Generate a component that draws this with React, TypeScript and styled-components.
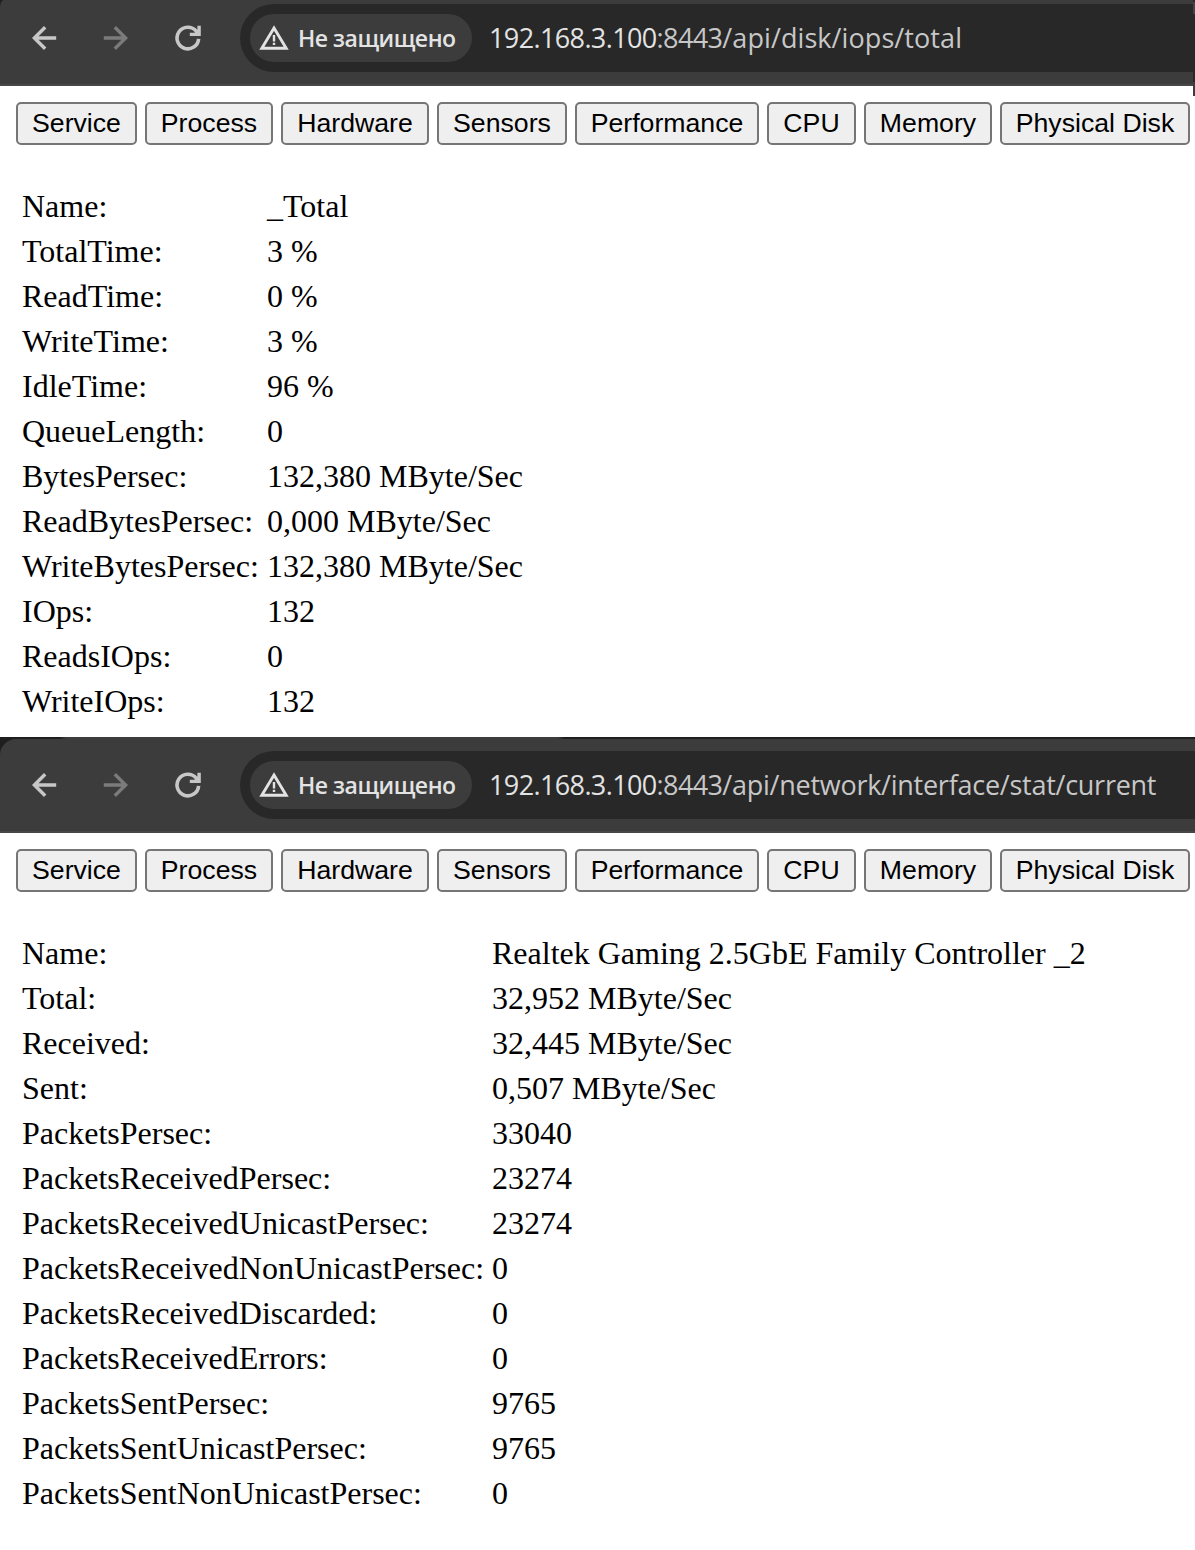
import React from 'react';
import styled, { createGlobalStyle } from 'styled-components';

const GlobalStyle = createGlobalStyle`
  body { margin: 0; background: #fff; overflow: hidden; }
  * { box-sizing: border-box; }
`;

const Page = styled.div`
  position: relative;
  width: 1195px;
  height: 1550px;
  background: #fff;
  overflow: hidden;
`;

const Window = styled.section<{ $height: number }>`
  height: ${p => p.$height}px;
  display: flex;
  flex-direction: column;
`;

const WindowEdge = styled.div`
  position: absolute;
  top: 0;
  right: 0;
  width: 2px;
  height: 96px;
  background: linear-gradient(#282828 2px, #444 2px, #444 14px, #282828 14px, #282828 82px, #3c3c3c 82px);
`;

const TabStrip = styled.div`
  height: 2px;
  background: linear-gradient(to right, #1f1f1f 60px, #3c3c3c 66px, #3c3c3c 558px, #1f1f1f 564px);
`;

const ToolbarBack = styled.div`
  background: #1f1f1f;
`;

const Toolbar = styled.div<{ $first: boolean }>`
  height: ${p => (p.$first ? 86 : 94)}px;
  padding: ${p => (p.$first ? '4px 0 12px 30px' : '12px 0 12px 30px')};
  display: flex;
  align-items: center;
  background: #3c3c3c;
  border-bottom: 2px solid #474747;
  border-top-left-radius: ${p => (p.$first ? '4px 8px' : '16px')};
`;

const NavIcons = styled.div`
  display: flex;
  gap: 44px;
  width: 210px;
  flex: none;
  svg { display: block; }
`;

const Omnibox = styled.div`
  flex: 1;
  height: 68px;
  padding-left: 10px;
  display: flex;
  align-items: center;
  background: #282828;
  border-radius: 34px 0 0 34px;
`;

const SecurityChip = styled.div`
  width: 222px;
  height: 48px;
  padding-left: 9px;
  display: flex;
  align-items: center;
  gap: 9px;
  border-radius: 24px;
  background: #3c3c3c;
  color: #e3e3e3;
  font: 600 23px/48px 'Open Sans', sans-serif;
  letter-spacing: -0.48px;
  white-space: nowrap;
  svg { flex: none; }
`;

const Url = styled.div`
  margin-left: 17px;
  color: #c7c7c7;
  font: 400 27px/48px 'Open Sans', sans-serif;
  letter-spacing: -0.62px;
  white-space: nowrap;
`;

const Host = styled.span`
  color: #e3e3e3;
`;

const Path = styled.span<{ $spacing: number }>`
  letter-spacing: ${p => p.$spacing}px;
`;

const Menu = styled.nav`
  display: flex;
  gap: 8px;
  padding: 16px 0 0 16px;
`;

const MenuButton = styled.button<{ $width: number }>`
  flex: none;
  width: ${p => p.$width}px;
  height: 43px;
  padding: 0 0 1px;
  border: 2px solid #767676;
  border-radius: 5px;
  background: #efefef;
  color: #000;
  font: 26.667px/36px 'Liberation Sans', Arial, sans-serif;
  white-space: nowrap;
`;

const Stats = styled.dl<{ $labelWidth: number }>`
  display: grid;
  grid-template-columns: ${p => p.$labelWidth}px 1fr;
  grid-auto-rows: 45px;
  margin: 39px 0 0 22px;
  color: #000;
  font: 32px/45px 'Liberation Serif', 'Times New Roman', serif;
  white-space: nowrap;
`;

const Label = styled.dt`
  margin: 0;
`;

const Value = styled.dd`
  margin: 0;
`;

const BackIcon = () => (
  <svg width="28" height="28" viewBox="0 0 28 28" fill="none" stroke="#c7c7c7" strokeWidth="3.4">
    <path d="M26.2 14H4.5M15.2 3.2L4.4 14l10.8 10.8" />
  </svg>
);

const ForwardIcon = () => (
  <svg width="28" height="28" viewBox="0 0 28 28" fill="none" stroke="#7b7b7b" strokeWidth="3.4">
    <path d="M1.8 14h21.7M12.8 3.2L23.6 14 12.8 24.8" />
  </svg>
);

const ReloadIcon = () => (
  <svg width="28" height="28" viewBox="0 0 28 28" fill="none" stroke="#c7c7c7" strokeWidth="3.6">
    <path d="M24.6 14.8A10.8 10.8 0 1 1 22.2 7.2L23.6 9.4" />
    <path d="M25.1 1.8V10.4H15.8" strokeWidth="3.4" />
    <path d="M20 9.5L24 5v5z" fill="#c7c7c7" stroke="none" />
  </svg>
);

const WarningIcon = () => (
  <svg width="30" height="26" viewBox="0 0 30 26">
    <path d="M15 3L27.2 23.3H2.8Z" fill="none" stroke="#e3e3e3" strokeWidth="2.9" />
    <path d="M13.8 10h2.4v6.4h-2.4zM13.8 17.8h2.4v2.2h-2.4z" fill="#e3e3e3" />
  </svg>
);

const menu: [string, number][] = [
  ['Service', 121],
  ['Process', 128],
  ['Hardware', 148],
  ['Sensors', 130],
  ['Performance', 184],
  ['CPU', 89],
  ['Memory', 128],
  ['Physical Disk', 190],
];

const diskStats: [string, string][] = [
  ['Name:', '_Total'],
  ['TotalTime:', '3 %'],
  ['ReadTime:', '0 %'],
  ['WriteTime:', '3 %'],
  ['IdleTime:', '96 %'],
  ['QueueLength:', '0'],
  ['BytesPersec:', '132,380 MByte/Sec'],
  ['ReadBytesPersec:', '0,000 MByte/Sec'],
  ['WriteBytesPersec:', '132,380 MByte/Sec'],
  ['IOps:', '132'],
  ['ReadsIOps:', '0'],
  ['WriteIOps:', '132'],
];

const networkStats: [string, string][] = [
  ['Name:', 'Realtek Gaming 2.5GbE Family Controller _2'],
  ['Total:', '32,952 MByte/Sec'],
  ['Received:', '32,445 MByte/Sec'],
  ['Sent:', '0,507 MByte/Sec'],
  ['PacketsPersec:', '33040'],
  ['PacketsReceivedPersec:', '23274'],
  ['PacketsReceivedUnicastPersec:', '23274'],
  ['PacketsReceivedNonUnicastPersec:', '0'],
  ['PacketsReceivedDiscarded:', '0'],
  ['PacketsReceivedErrors:', '0'],
  ['PacketsSentPersec:', '9765'],
  ['PacketsSentUnicastPersec:', '9765'],
  ['PacketsSentNonUnicastPersec:', '0'],
];

interface BrowserProps {
  first?: boolean;
  path: string;
  spacing: number;
  height: number;
  labelWidth: number;
  stats: [string, string][];
}

const Browser = ({ first = false, path, spacing, height, labelWidth, stats }: BrowserProps) => (
  <Window $height={height}>
    {!first && <TabStrip />}
    <ToolbarBack>
      <Toolbar $first={first}>
        <NavIcons>
          <BackIcon />
          <ForwardIcon />
          <ReloadIcon />
        </NavIcons>
        <Omnibox>
          <SecurityChip>
            <WarningIcon />
            <span>Не защищено</span>
          </SecurityChip>
          <Url>
            <Host>192.168.3.100</Host>:8443<Path $spacing={spacing}>{path}</Path>
          </Url>
        </Omnibox>
      </Toolbar>
    </ToolbarBack>
    <Menu>
      {menu.map(([label, width]) => (
        <MenuButton key={label} $width={width}>{label}</MenuButton>
      ))}
    </Menu>
    <Stats $labelWidth={labelWidth}>
      {stats.map(([label, value]) => (
        <React.Fragment key={label}>
          <Label>{label}</Label>
          <Value>{value}</Value>
        </React.Fragment>
      ))}
    </Stats>
  </Window>
);

export default function App() {
  return (
    <>
      <GlobalStyle />
      <Page>
        <Browser first path="/api/disk/iops/total" spacing={0.08} height={737} labelWidth={245} stats={diskStats} />
        <Browser path="/api/network/interface/stat/current" spacing={-0.26} height={813} labelWidth={470} stats={networkStats} />
        <WindowEdge />
      </Page>
    </>
  );
}
